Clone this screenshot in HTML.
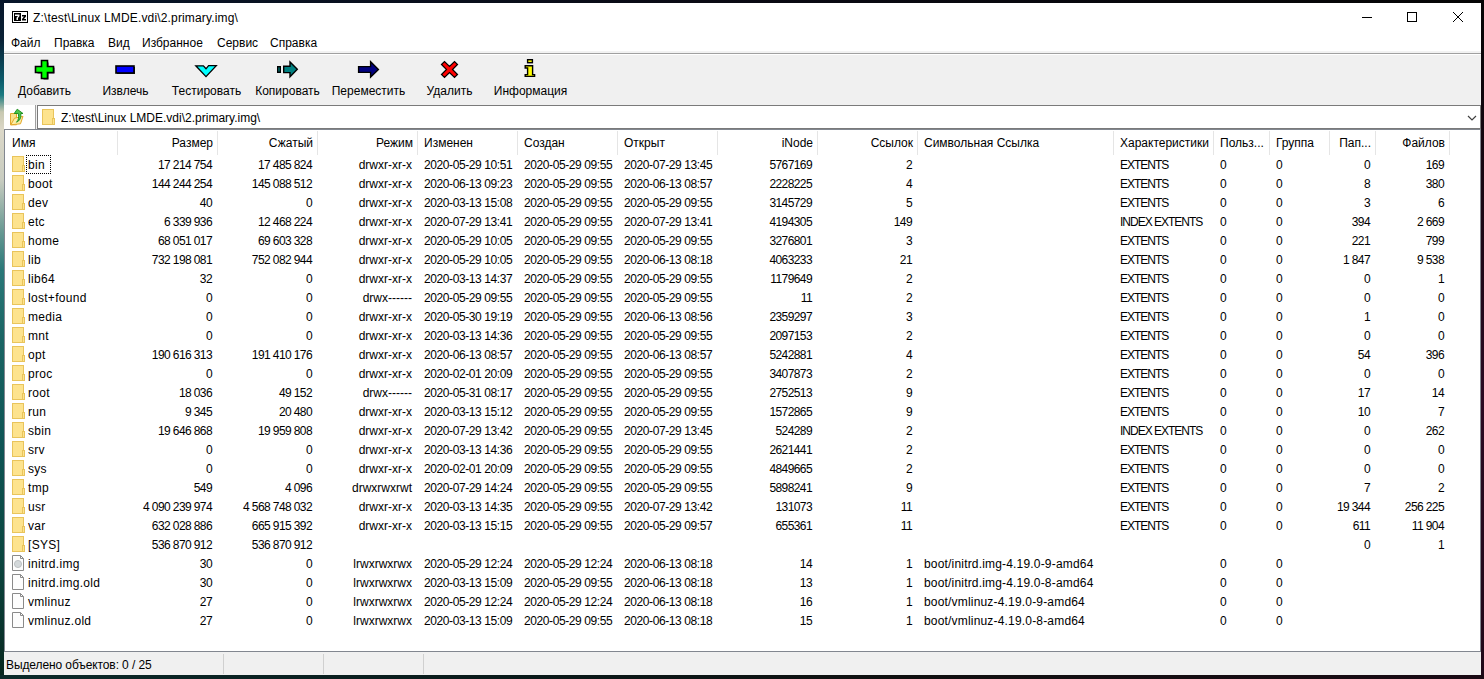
<!DOCTYPE html>
<html><head><meta charset="utf-8">
<style>
*{margin:0;padding:0;box-sizing:border-box}
html,body{width:1484px;height:679px;overflow:hidden}
body{position:relative;font-family:"Liberation Sans",sans-serif;font-size:12px;color:#000;
 background:linear-gradient(90deg,#0b2a3a 0,#0b2a3a 4px,#1a0c16 1480px,#1a0c16 100%);}
.a{position:absolute}
#bgl{position:absolute;left:0;top:0;width:4px;height:679px;background:linear-gradient(180deg,#07162a 0,#0a2236 40px,#0c5a6a 80px,#1a7a80 95px,#c8c8b0 112px,#dcd8c8 130px,#c8ccc0 180px,#6a9a94 230px,#2a7878 270px,#1a6464 340px,#0e5454 450px,#0c4640 560px,#07261e 679px)}
#bgr{position:absolute;left:1481px;top:0;width:3px;height:679px;background:linear-gradient(180deg,#050505 0,#1a0714 200px,#2a0a22 400px,#200818 679px)}
#bgb{position:absolute;left:0;top:675px;width:1484px;height:4px;background:linear-gradient(90deg,#0a2a2a 0,#0a1a1a 500px,#101010 900px,#1a0a14 1484px)}
#bgt{position:absolute;left:0;top:0;width:1484px;height:3px;background:linear-gradient(90deg,#07162a 0,#0a0a14 700px,#050505 1484px)}
#win{position:absolute;left:4px;top:3px;width:1477px;height:672px;background:#f0f0f0;overflow:hidden}
.t{position:absolute;white-space:pre;line-height:15px;margin-top:1px}
.c,.hd{position:absolute;white-space:pre;line-height:19px;height:19px;margin-top:1px}
.hd{line-height:22px;height:22px}
.r{text-align:right}
.n{letter-spacing:-0.6px}
.d{letter-spacing:-0.4px}
.nm{letter-spacing:0.3px}
.sl{letter-spacing:0.18px}
.ch{letter-spacing:-1px}
.hsep{position:absolute;top:131px;width:1px;height:24px;background:#e5e5e5}
.ic{position:absolute}
</style></head><body>
<div id="bgt"></div><div id="bgl"></div><div id="bgr"></div><div id="bgb"></div>
<div id="win">
 <!-- title bar -->
 <div class="a" style="left:0;top:0;width:1477px;height:48px;background:#fff"></div>
 <!-- menu bottom separator -->
 <div class="a" style="left:0;top:48px;width:1477px;height:2px;background:#f2f2f2"></div>
 <div class="a" style="left:0;top:50px;width:1477px;height:1px;background:#a0a0a0"></div>
 <div class="a" style="left:0;top:51px;width:1477px;height:1px;background:#fff"></div>
</div>
<!-- 7z icon -->
<svg class="a" style="left:12px;top:11px" width="16" height="12" viewBox="0 0 16 12">
 <rect x="0.5" y="0.5" width="15" height="11" fill="#fff" stroke="#000"/>
 <rect x="2" y="2" width="7" height="8" fill="#000"/>
 <path d="M3 3.5H7.5V5L6 7V9H4.5V6.8L6 5H3Z" fill="#fff"/>
 <path d="M10 4H14V5.5L12 8H14V9.5H10V8L12 5.5H10Z" fill="#000"/>
</svg>
<div class="t" style="left:33px;top:10px;letter-spacing:0.16px">Z:\test\Linux LMDE.vdi\2.primary.img\</div>
<!-- window buttons -->
<div class="a" style="left:1362px;top:17px;width:10px;height:1px;background:#000"></div>
<div class="a" style="left:1407px;top:12px;width:10px;height:10px;border:1px solid #000"></div>
<svg class="a" style="left:1452px;top:11px" width="12" height="12" viewBox="0 0 12 12"><path d="M1 1L11 11M11 1L1 11" stroke="#000" stroke-width="1"/></svg>
<!-- menu -->
<div class="t" style="left:11px;top:35px">Файл</div>
<div class="t" style="left:54px;top:35px">Правка</div>
<div class="t" style="left:108px;top:35px">Вид</div>
<div class="t" style="left:142px;top:35px">Избранное</div>
<div class="t" style="left:217px;top:35px">Сервис</div>
<div class="t" style="left:270px;top:35px">Справка</div>
<!-- toolbar -->
<div class="t" style="left:4px;width:81px;top:83px;text-align:center">Добавить</div>
<div class="t" style="left:85px;width:81px;top:83px;text-align:center">Извлечь</div>
<div class="t" style="left:166px;width:81px;top:83px;text-align:center">Тестировать</div>
<div class="t" style="left:247px;width:81px;top:83px;text-align:center">Копировать</div>
<div class="t" style="left:328px;width:81px;top:83px;text-align:center">Переместить</div>
<div class="t" style="left:409px;width:81px;top:83px;text-align:center">Удалить</div>
<div class="t" style="left:490px;width:81px;top:83px;text-align:center">Информация</div>
<!-- icons -->
<svg class="a" style="left:34px;top:59px" width="22" height="22" viewBox="0 0 22 22">
 <path d="M8.5 2.5H13.5V7.5H19.5V13.5H13.5V19.5H8.5V13.5H2.5V7.5H8.5Z" fill="#2a1a2a" transform="translate(1,1)"/>
 <path d="M7.5 1.5H13.5V7.5H19.5V13.5H13.5V19.5H7.5V13.5H1.5V7.5H7.5Z" fill="#00ff00" stroke="#000" stroke-width="1.6"/>
</svg>
<svg class="a" style="left:115px;top:65px" width="21" height="10" viewBox="0 0 21 10">
 <rect x="2" y="2" width="18" height="7" fill="#2a2a1a"/>
 <rect x="1" y="1" width="18" height="7" fill="#0000ff" stroke="#000" stroke-width="1.6"/>
</svg>
<svg class="a" style="left:194px;top:64px" width="24" height="14" viewBox="0 0 24 14">
 <path d="M1.8 1.8H9.4L12 4.8L14.6 1.6H22.3L12 12.6Z" fill="#00ffff" stroke="#000" stroke-width="1.3" stroke-linejoin="miter"/>
</svg>
<svg class="a" style="left:276px;top:60px" width="24" height="19" viewBox="0 0 24 19">
 <rect x="1.7" y="6.7" width="2.6" height="5.6" fill="#008080" stroke="#000" stroke-width="1.4"/>
 <path d="M7.7 6.2H14V1.9L21.3 9.3L14 16.7V12.6H7.7Z" fill="#008080" stroke="#000" stroke-width="1.4"/>
</svg>
<svg class="a" style="left:357px;top:60px" width="24" height="19" viewBox="0 0 24 19">
 <path d="M1.6 6.6H13.6V1.7L21.4 9.4L13.6 17.1V12.4H1.6Z" fill="#000080" stroke="#000" stroke-width="1.4"/>
</svg>
<svg class="a" style="left:440px;top:60px" width="19" height="19" viewBox="0 0 19 19">
 <path d="M1.5 4.5L4.5 1.5L9.5 6.5L14.5 1.5L17.5 4.5L12.5 9.5L17.5 14.5L14.5 17.5L9.5 12.5L4.5 17.5L1.5 14.5L6.5 9.5Z" fill="#ff0000" stroke="#000" stroke-width="1.2"/>
</svg>
<svg class="a" style="left:524px;top:58px" width="13" height="20" viewBox="0 0 13 20">
 <rect x="3.6" y="1.7" width="4.8" height="3" fill="#ffff00" stroke="#000" stroke-width="1.4"/>
 <path d="M1.2 7.7H8.6V16.6H10.6V18.4H1.2V16.6H3.6V10H1.2Z" fill="#ffff00" stroke="#000" stroke-width="1.4"/>
</svg>
<!-- address row -->
<div class="a" style="left:4px;top:105px;width:31px;height:24px;background:#fff"></div>
<div class="a" style="left:35px;top:105px;width:1px;height:24px;background:#a0a0a0"></div>
<div class="a" style="left:37px;top:105px;width:1444px;height:24px;background:#fff;border:1px solid #7a7a7a;border-bottom-width:1px"></div>
<svg class="a" style="left:10px;top:108px" width="16" height="18" viewBox="0 0 16 18">
 <path d="M0.5 5.5H6.5V16.8H0.5Z" fill="#fbe08a" stroke="#e3a82a" stroke-width="1"/>
 <path d="M0.8 16.8L4.5 10.2L13 8.3L10.5 15.8Z" fill="#fdeea8" stroke="#e3a82a" stroke-width="1"/>
 <path d="M6.5 14.2C8.5 12.5 9 9.5 8.3 5.5H4.2L7.2 1.2L13 5.5H10.8C11.2 10 10 12.5 6.5 14.2Z" fill="#4cc44c" stroke="#168a16" stroke-width="0.9"/>
</svg>
<svg class="a" style="left:42px;top:109px" width="14" height="16" viewBox="0 0 14 16">
 <rect x="0.5" y="0.5" width="11" height="15" fill="#fde38e" stroke="#e9c45b"/>
 <rect x="10.5" y="9.5" width="2" height="6" fill="#fde38e" stroke="#e9c45b"/>
</svg>
<div class="t" style="left:61px;top:110px">Z:\test\Linux LMDE.vdi\2.primary.img\</div>
<svg class="a" style="left:1467px;top:115px" width="10" height="7" viewBox="0 0 10 7"><path d="M1 1L5 5L9 1" fill="none" stroke="#404040" stroke-width="1.2"/></svg>
<!-- list -->
<div class="a" style="left:4px;top:129px;width:1477px;height:523px;background:#fff;border:1px solid #828790"></div>
<div class="hd" style="left:12px;top:131px">Имя</div>
<div class="hd r" style="left:117px;width:96px;top:131px">Размер</div>
<div class="hsep" style="left:117px"></div>
<div class="hd r" style="left:217px;width:96px;top:131px">Сжатый</div>
<div class="hsep" style="left:217px"></div>
<div class="hd r" style="left:317px;width:96px;top:131px">Режим</div>
<div class="hsep" style="left:317px"></div>
<div class="hd" style="left:424px;top:131px">Изменен</div>
<div class="hsep" style="left:417px"></div>
<div class="hd" style="left:524px;top:131px">Создан</div>
<div class="hsep" style="left:517px"></div>
<div class="hd" style="left:624px;top:131px">Открыт</div>
<div class="hsep" style="left:617px"></div>
<div class="hd r" style="left:717px;width:96px;top:131px">iNode</div>
<div class="hsep" style="left:717px"></div>
<div class="hd r" style="left:817px;width:96px;top:131px">Ссылок</div>
<div class="hsep" style="left:817px"></div>
<div class="hd" style="left:924px;top:131px">Символьная Ссылка</div>
<div class="hsep" style="left:917px"></div>
<div class="hd" style="left:1120px;top:131px">Характеристики</div>
<div class="hsep" style="left:1113px"></div>
<div class="hd" style="left:1220px;top:131px">Польз...</div>
<div class="hsep" style="left:1213px"></div>
<div class="hd" style="left:1276px;top:131px">Группа</div>
<div class="hsep" style="left:1269px"></div>
<div class="hd r" style="left:1329px;width:42px;top:131px">Пап...</div>
<div class="hsep" style="left:1329px"></div>
<div class="hd r" style="left:1375px;width:70px;top:131px">Файлов</div>
<div class="hsep" style="left:1375px"></div>
<div class="hsep" style="left:1449px"></div>
<svg class="ic" style="left:12px;top:156px" width="14" height="16" viewBox="0 0 14 16"><rect x="0.5" y="0.5" width="11" height="15" fill="#fde38e" stroke="#e9c45b"/><rect x="10.5" y="9.5" width="2" height="6" fill="#fde38e" stroke="#e9c45b"/></svg>
<div class="c nm" style="left:28px;top:155px">bin</div>
<div class="c r n" style="left:117px;width:95px;top:155px">17 214 754</div>
<div class="c r n" style="left:217px;width:95px;top:155px">17 485 824</div>
<div class="c r" style="left:317px;width:95px;top:155px">drwxr-xr-x</div>
<div class="c d" style="left:424px;top:155px">2020-05-29 10:51</div>
<div class="c d" style="left:524px;top:155px">2020-05-29 09:55</div>
<div class="c d" style="left:624px;top:155px">2020-07-29 13:45</div>
<div class="c r n" style="left:717px;width:95px;top:155px">5767169</div>
<div class="c r n" style="left:817px;width:95px;top:155px">2</div>
<div class="c ch" style="left:1120px;top:155px">EXTENTS</div>
<div class="c" style="left:1220px;top:155px">0</div>
<div class="c n" style="left:1276px;top:155px">0</div>
<div class="c r n" style="left:1329px;width:41px;top:155px">0</div>
<div class="c r n" style="left:1375px;width:69px;top:155px">169</div>
<svg class="ic" style="left:12px;top:175px" width="14" height="16" viewBox="0 0 14 16"><rect x="0.5" y="0.5" width="11" height="15" fill="#fde38e" stroke="#e9c45b"/><rect x="10.5" y="9.5" width="2" height="6" fill="#fde38e" stroke="#e9c45b"/></svg>
<div class="c nm" style="left:28px;top:174px">boot</div>
<div class="c r n" style="left:117px;width:95px;top:174px">144 244 254</div>
<div class="c r n" style="left:217px;width:95px;top:174px">145 088 512</div>
<div class="c r" style="left:317px;width:95px;top:174px">drwxr-xr-x</div>
<div class="c d" style="left:424px;top:174px">2020-06-13 09:23</div>
<div class="c d" style="left:524px;top:174px">2020-05-29 09:55</div>
<div class="c d" style="left:624px;top:174px">2020-06-13 08:57</div>
<div class="c r n" style="left:717px;width:95px;top:174px">2228225</div>
<div class="c r n" style="left:817px;width:95px;top:174px">4</div>
<div class="c ch" style="left:1120px;top:174px">EXTENTS</div>
<div class="c" style="left:1220px;top:174px">0</div>
<div class="c n" style="left:1276px;top:174px">0</div>
<div class="c r n" style="left:1329px;width:41px;top:174px">8</div>
<div class="c r n" style="left:1375px;width:69px;top:174px">380</div>
<svg class="ic" style="left:12px;top:194px" width="14" height="16" viewBox="0 0 14 16"><rect x="0.5" y="0.5" width="11" height="15" fill="#fde38e" stroke="#e9c45b"/><rect x="10.5" y="9.5" width="2" height="6" fill="#fde38e" stroke="#e9c45b"/></svg>
<div class="c nm" style="left:28px;top:193px">dev</div>
<div class="c r n" style="left:117px;width:95px;top:193px">40</div>
<div class="c r n" style="left:217px;width:95px;top:193px">0</div>
<div class="c r" style="left:317px;width:95px;top:193px">drwxr-xr-x</div>
<div class="c d" style="left:424px;top:193px">2020-03-13 15:08</div>
<div class="c d" style="left:524px;top:193px">2020-05-29 09:55</div>
<div class="c d" style="left:624px;top:193px">2020-05-29 09:55</div>
<div class="c r n" style="left:717px;width:95px;top:193px">3145729</div>
<div class="c r n" style="left:817px;width:95px;top:193px">5</div>
<div class="c ch" style="left:1120px;top:193px">EXTENTS</div>
<div class="c" style="left:1220px;top:193px">0</div>
<div class="c n" style="left:1276px;top:193px">0</div>
<div class="c r n" style="left:1329px;width:41px;top:193px">3</div>
<div class="c r n" style="left:1375px;width:69px;top:193px">6</div>
<svg class="ic" style="left:12px;top:213px" width="14" height="16" viewBox="0 0 14 16"><rect x="0.5" y="0.5" width="11" height="15" fill="#fde38e" stroke="#e9c45b"/><rect x="10.5" y="9.5" width="2" height="6" fill="#fde38e" stroke="#e9c45b"/></svg>
<div class="c nm" style="left:28px;top:212px">etc</div>
<div class="c r n" style="left:117px;width:95px;top:212px">6 339 936</div>
<div class="c r n" style="left:217px;width:95px;top:212px">12 468 224</div>
<div class="c r" style="left:317px;width:95px;top:212px">drwxr-xr-x</div>
<div class="c d" style="left:424px;top:212px">2020-07-29 13:41</div>
<div class="c d" style="left:524px;top:212px">2020-05-29 09:55</div>
<div class="c d" style="left:624px;top:212px">2020-07-29 13:41</div>
<div class="c r n" style="left:717px;width:95px;top:212px">4194305</div>
<div class="c r n" style="left:817px;width:95px;top:212px">149</div>
<div class="c ch" style="left:1120px;top:212px">INDEX EXTENTS</div>
<div class="c" style="left:1220px;top:212px">0</div>
<div class="c n" style="left:1276px;top:212px">0</div>
<div class="c r n" style="left:1329px;width:41px;top:212px">394</div>
<div class="c r n" style="left:1375px;width:69px;top:212px">2 669</div>
<svg class="ic" style="left:12px;top:232px" width="14" height="16" viewBox="0 0 14 16"><rect x="0.5" y="0.5" width="11" height="15" fill="#fde38e" stroke="#e9c45b"/><rect x="10.5" y="9.5" width="2" height="6" fill="#fde38e" stroke="#e9c45b"/></svg>
<div class="c nm" style="left:28px;top:231px">home</div>
<div class="c r n" style="left:117px;width:95px;top:231px">68 051 017</div>
<div class="c r n" style="left:217px;width:95px;top:231px">69 603 328</div>
<div class="c r" style="left:317px;width:95px;top:231px">drwxr-xr-x</div>
<div class="c d" style="left:424px;top:231px">2020-05-29 10:05</div>
<div class="c d" style="left:524px;top:231px">2020-05-29 09:55</div>
<div class="c d" style="left:624px;top:231px">2020-05-29 09:55</div>
<div class="c r n" style="left:717px;width:95px;top:231px">3276801</div>
<div class="c r n" style="left:817px;width:95px;top:231px">3</div>
<div class="c ch" style="left:1120px;top:231px">EXTENTS</div>
<div class="c" style="left:1220px;top:231px">0</div>
<div class="c n" style="left:1276px;top:231px">0</div>
<div class="c r n" style="left:1329px;width:41px;top:231px">221</div>
<div class="c r n" style="left:1375px;width:69px;top:231px">799</div>
<svg class="ic" style="left:12px;top:251px" width="14" height="16" viewBox="0 0 14 16"><rect x="0.5" y="0.5" width="11" height="15" fill="#fde38e" stroke="#e9c45b"/><rect x="10.5" y="9.5" width="2" height="6" fill="#fde38e" stroke="#e9c45b"/></svg>
<div class="c nm" style="left:28px;top:250px">lib</div>
<div class="c r n" style="left:117px;width:95px;top:250px">732 198 081</div>
<div class="c r n" style="left:217px;width:95px;top:250px">752 082 944</div>
<div class="c r" style="left:317px;width:95px;top:250px">drwxr-xr-x</div>
<div class="c d" style="left:424px;top:250px">2020-05-29 10:05</div>
<div class="c d" style="left:524px;top:250px">2020-05-29 09:55</div>
<div class="c d" style="left:624px;top:250px">2020-06-13 08:18</div>
<div class="c r n" style="left:717px;width:95px;top:250px">4063233</div>
<div class="c r n" style="left:817px;width:95px;top:250px">21</div>
<div class="c ch" style="left:1120px;top:250px">EXTENTS</div>
<div class="c" style="left:1220px;top:250px">0</div>
<div class="c n" style="left:1276px;top:250px">0</div>
<div class="c r n" style="left:1329px;width:41px;top:250px">1 847</div>
<div class="c r n" style="left:1375px;width:69px;top:250px">9 538</div>
<svg class="ic" style="left:12px;top:270px" width="14" height="16" viewBox="0 0 14 16"><rect x="0.5" y="0.5" width="11" height="15" fill="#fde38e" stroke="#e9c45b"/><rect x="10.5" y="9.5" width="2" height="6" fill="#fde38e" stroke="#e9c45b"/></svg>
<div class="c nm" style="left:28px;top:269px">lib64</div>
<div class="c r n" style="left:117px;width:95px;top:269px">32</div>
<div class="c r n" style="left:217px;width:95px;top:269px">0</div>
<div class="c r" style="left:317px;width:95px;top:269px">drwxr-xr-x</div>
<div class="c d" style="left:424px;top:269px">2020-03-13 14:37</div>
<div class="c d" style="left:524px;top:269px">2020-05-29 09:55</div>
<div class="c d" style="left:624px;top:269px">2020-05-29 09:55</div>
<div class="c r n" style="left:717px;width:95px;top:269px">1179649</div>
<div class="c r n" style="left:817px;width:95px;top:269px">2</div>
<div class="c ch" style="left:1120px;top:269px">EXTENTS</div>
<div class="c" style="left:1220px;top:269px">0</div>
<div class="c n" style="left:1276px;top:269px">0</div>
<div class="c r n" style="left:1329px;width:41px;top:269px">0</div>
<div class="c r n" style="left:1375px;width:69px;top:269px">1</div>
<svg class="ic" style="left:12px;top:289px" width="14" height="16" viewBox="0 0 14 16"><rect x="0.5" y="0.5" width="11" height="15" fill="#fde38e" stroke="#e9c45b"/><rect x="10.5" y="9.5" width="2" height="6" fill="#fde38e" stroke="#e9c45b"/></svg>
<div class="c nm" style="left:28px;top:288px">lost+found</div>
<div class="c r n" style="left:117px;width:95px;top:288px">0</div>
<div class="c r n" style="left:217px;width:95px;top:288px">0</div>
<div class="c r" style="left:317px;width:95px;top:288px">drwx------</div>
<div class="c d" style="left:424px;top:288px">2020-05-29 09:55</div>
<div class="c d" style="left:524px;top:288px">2020-05-29 09:55</div>
<div class="c d" style="left:624px;top:288px">2020-05-29 09:55</div>
<div class="c r n" style="left:717px;width:95px;top:288px">11</div>
<div class="c r n" style="left:817px;width:95px;top:288px">2</div>
<div class="c ch" style="left:1120px;top:288px">EXTENTS</div>
<div class="c" style="left:1220px;top:288px">0</div>
<div class="c n" style="left:1276px;top:288px">0</div>
<div class="c r n" style="left:1329px;width:41px;top:288px">0</div>
<div class="c r n" style="left:1375px;width:69px;top:288px">0</div>
<svg class="ic" style="left:12px;top:308px" width="14" height="16" viewBox="0 0 14 16"><rect x="0.5" y="0.5" width="11" height="15" fill="#fde38e" stroke="#e9c45b"/><rect x="10.5" y="9.5" width="2" height="6" fill="#fde38e" stroke="#e9c45b"/></svg>
<div class="c nm" style="left:28px;top:307px">media</div>
<div class="c r n" style="left:117px;width:95px;top:307px">0</div>
<div class="c r n" style="left:217px;width:95px;top:307px">0</div>
<div class="c r" style="left:317px;width:95px;top:307px">drwxr-xr-x</div>
<div class="c d" style="left:424px;top:307px">2020-05-30 19:19</div>
<div class="c d" style="left:524px;top:307px">2020-05-29 09:55</div>
<div class="c d" style="left:624px;top:307px">2020-06-13 08:56</div>
<div class="c r n" style="left:717px;width:95px;top:307px">2359297</div>
<div class="c r n" style="left:817px;width:95px;top:307px">3</div>
<div class="c ch" style="left:1120px;top:307px">EXTENTS</div>
<div class="c" style="left:1220px;top:307px">0</div>
<div class="c n" style="left:1276px;top:307px">0</div>
<div class="c r n" style="left:1329px;width:41px;top:307px">1</div>
<div class="c r n" style="left:1375px;width:69px;top:307px">0</div>
<svg class="ic" style="left:12px;top:327px" width="14" height="16" viewBox="0 0 14 16"><rect x="0.5" y="0.5" width="11" height="15" fill="#fde38e" stroke="#e9c45b"/><rect x="10.5" y="9.5" width="2" height="6" fill="#fde38e" stroke="#e9c45b"/></svg>
<div class="c nm" style="left:28px;top:326px">mnt</div>
<div class="c r n" style="left:117px;width:95px;top:326px">0</div>
<div class="c r n" style="left:217px;width:95px;top:326px">0</div>
<div class="c r" style="left:317px;width:95px;top:326px">drwxr-xr-x</div>
<div class="c d" style="left:424px;top:326px">2020-03-13 14:36</div>
<div class="c d" style="left:524px;top:326px">2020-05-29 09:55</div>
<div class="c d" style="left:624px;top:326px">2020-05-29 09:55</div>
<div class="c r n" style="left:717px;width:95px;top:326px">2097153</div>
<div class="c r n" style="left:817px;width:95px;top:326px">2</div>
<div class="c ch" style="left:1120px;top:326px">EXTENTS</div>
<div class="c" style="left:1220px;top:326px">0</div>
<div class="c n" style="left:1276px;top:326px">0</div>
<div class="c r n" style="left:1329px;width:41px;top:326px">0</div>
<div class="c r n" style="left:1375px;width:69px;top:326px">0</div>
<svg class="ic" style="left:12px;top:346px" width="14" height="16" viewBox="0 0 14 16"><rect x="0.5" y="0.5" width="11" height="15" fill="#fde38e" stroke="#e9c45b"/><rect x="10.5" y="9.5" width="2" height="6" fill="#fde38e" stroke="#e9c45b"/></svg>
<div class="c nm" style="left:28px;top:345px">opt</div>
<div class="c r n" style="left:117px;width:95px;top:345px">190 616 313</div>
<div class="c r n" style="left:217px;width:95px;top:345px">191 410 176</div>
<div class="c r" style="left:317px;width:95px;top:345px">drwxr-xr-x</div>
<div class="c d" style="left:424px;top:345px">2020-06-13 08:57</div>
<div class="c d" style="left:524px;top:345px">2020-05-29 09:55</div>
<div class="c d" style="left:624px;top:345px">2020-06-13 08:57</div>
<div class="c r n" style="left:717px;width:95px;top:345px">5242881</div>
<div class="c r n" style="left:817px;width:95px;top:345px">4</div>
<div class="c ch" style="left:1120px;top:345px">EXTENTS</div>
<div class="c" style="left:1220px;top:345px">0</div>
<div class="c n" style="left:1276px;top:345px">0</div>
<div class="c r n" style="left:1329px;width:41px;top:345px">54</div>
<div class="c r n" style="left:1375px;width:69px;top:345px">396</div>
<svg class="ic" style="left:12px;top:365px" width="14" height="16" viewBox="0 0 14 16"><rect x="0.5" y="0.5" width="11" height="15" fill="#fde38e" stroke="#e9c45b"/><rect x="10.5" y="9.5" width="2" height="6" fill="#fde38e" stroke="#e9c45b"/></svg>
<div class="c nm" style="left:28px;top:364px">proc</div>
<div class="c r n" style="left:117px;width:95px;top:364px">0</div>
<div class="c r n" style="left:217px;width:95px;top:364px">0</div>
<div class="c r" style="left:317px;width:95px;top:364px">drwxr-xr-x</div>
<div class="c d" style="left:424px;top:364px">2020-02-01 20:09</div>
<div class="c d" style="left:524px;top:364px">2020-05-29 09:55</div>
<div class="c d" style="left:624px;top:364px">2020-05-29 09:55</div>
<div class="c r n" style="left:717px;width:95px;top:364px">3407873</div>
<div class="c r n" style="left:817px;width:95px;top:364px">2</div>
<div class="c ch" style="left:1120px;top:364px">EXTENTS</div>
<div class="c" style="left:1220px;top:364px">0</div>
<div class="c n" style="left:1276px;top:364px">0</div>
<div class="c r n" style="left:1329px;width:41px;top:364px">0</div>
<div class="c r n" style="left:1375px;width:69px;top:364px">0</div>
<svg class="ic" style="left:12px;top:384px" width="14" height="16" viewBox="0 0 14 16"><rect x="0.5" y="0.5" width="11" height="15" fill="#fde38e" stroke="#e9c45b"/><rect x="10.5" y="9.5" width="2" height="6" fill="#fde38e" stroke="#e9c45b"/></svg>
<div class="c nm" style="left:28px;top:383px">root</div>
<div class="c r n" style="left:117px;width:95px;top:383px">18 036</div>
<div class="c r n" style="left:217px;width:95px;top:383px">49 152</div>
<div class="c r" style="left:317px;width:95px;top:383px">drwx------</div>
<div class="c d" style="left:424px;top:383px">2020-05-31 08:17</div>
<div class="c d" style="left:524px;top:383px">2020-05-29 09:55</div>
<div class="c d" style="left:624px;top:383px">2020-05-29 09:55</div>
<div class="c r n" style="left:717px;width:95px;top:383px">2752513</div>
<div class="c r n" style="left:817px;width:95px;top:383px">9</div>
<div class="c ch" style="left:1120px;top:383px">EXTENTS</div>
<div class="c" style="left:1220px;top:383px">0</div>
<div class="c n" style="left:1276px;top:383px">0</div>
<div class="c r n" style="left:1329px;width:41px;top:383px">17</div>
<div class="c r n" style="left:1375px;width:69px;top:383px">14</div>
<svg class="ic" style="left:12px;top:403px" width="14" height="16" viewBox="0 0 14 16"><rect x="0.5" y="0.5" width="11" height="15" fill="#fde38e" stroke="#e9c45b"/><rect x="10.5" y="9.5" width="2" height="6" fill="#fde38e" stroke="#e9c45b"/></svg>
<div class="c nm" style="left:28px;top:402px">run</div>
<div class="c r n" style="left:117px;width:95px;top:402px">9 345</div>
<div class="c r n" style="left:217px;width:95px;top:402px">20 480</div>
<div class="c r" style="left:317px;width:95px;top:402px">drwxr-xr-x</div>
<div class="c d" style="left:424px;top:402px">2020-03-13 15:12</div>
<div class="c d" style="left:524px;top:402px">2020-05-29 09:55</div>
<div class="c d" style="left:624px;top:402px">2020-05-29 09:55</div>
<div class="c r n" style="left:717px;width:95px;top:402px">1572865</div>
<div class="c r n" style="left:817px;width:95px;top:402px">9</div>
<div class="c ch" style="left:1120px;top:402px">EXTENTS</div>
<div class="c" style="left:1220px;top:402px">0</div>
<div class="c n" style="left:1276px;top:402px">0</div>
<div class="c r n" style="left:1329px;width:41px;top:402px">10</div>
<div class="c r n" style="left:1375px;width:69px;top:402px">7</div>
<svg class="ic" style="left:12px;top:422px" width="14" height="16" viewBox="0 0 14 16"><rect x="0.5" y="0.5" width="11" height="15" fill="#fde38e" stroke="#e9c45b"/><rect x="10.5" y="9.5" width="2" height="6" fill="#fde38e" stroke="#e9c45b"/></svg>
<div class="c nm" style="left:28px;top:421px">sbin</div>
<div class="c r n" style="left:117px;width:95px;top:421px">19 646 868</div>
<div class="c r n" style="left:217px;width:95px;top:421px">19 959 808</div>
<div class="c r" style="left:317px;width:95px;top:421px">drwxr-xr-x</div>
<div class="c d" style="left:424px;top:421px">2020-07-29 13:42</div>
<div class="c d" style="left:524px;top:421px">2020-05-29 09:55</div>
<div class="c d" style="left:624px;top:421px">2020-07-29 13:45</div>
<div class="c r n" style="left:717px;width:95px;top:421px">524289</div>
<div class="c r n" style="left:817px;width:95px;top:421px">2</div>
<div class="c ch" style="left:1120px;top:421px">INDEX EXTENTS</div>
<div class="c" style="left:1220px;top:421px">0</div>
<div class="c n" style="left:1276px;top:421px">0</div>
<div class="c r n" style="left:1329px;width:41px;top:421px">0</div>
<div class="c r n" style="left:1375px;width:69px;top:421px">262</div>
<svg class="ic" style="left:12px;top:441px" width="14" height="16" viewBox="0 0 14 16"><rect x="0.5" y="0.5" width="11" height="15" fill="#fde38e" stroke="#e9c45b"/><rect x="10.5" y="9.5" width="2" height="6" fill="#fde38e" stroke="#e9c45b"/></svg>
<div class="c nm" style="left:28px;top:440px">srv</div>
<div class="c r n" style="left:117px;width:95px;top:440px">0</div>
<div class="c r n" style="left:217px;width:95px;top:440px">0</div>
<div class="c r" style="left:317px;width:95px;top:440px">drwxr-xr-x</div>
<div class="c d" style="left:424px;top:440px">2020-03-13 14:36</div>
<div class="c d" style="left:524px;top:440px">2020-05-29 09:55</div>
<div class="c d" style="left:624px;top:440px">2020-05-29 09:55</div>
<div class="c r n" style="left:717px;width:95px;top:440px">2621441</div>
<div class="c r n" style="left:817px;width:95px;top:440px">2</div>
<div class="c ch" style="left:1120px;top:440px">EXTENTS</div>
<div class="c" style="left:1220px;top:440px">0</div>
<div class="c n" style="left:1276px;top:440px">0</div>
<div class="c r n" style="left:1329px;width:41px;top:440px">0</div>
<div class="c r n" style="left:1375px;width:69px;top:440px">0</div>
<svg class="ic" style="left:12px;top:460px" width="14" height="16" viewBox="0 0 14 16"><rect x="0.5" y="0.5" width="11" height="15" fill="#fde38e" stroke="#e9c45b"/><rect x="10.5" y="9.5" width="2" height="6" fill="#fde38e" stroke="#e9c45b"/></svg>
<div class="c nm" style="left:28px;top:459px">sys</div>
<div class="c r n" style="left:117px;width:95px;top:459px">0</div>
<div class="c r n" style="left:217px;width:95px;top:459px">0</div>
<div class="c r" style="left:317px;width:95px;top:459px">drwxr-xr-x</div>
<div class="c d" style="left:424px;top:459px">2020-02-01 20:09</div>
<div class="c d" style="left:524px;top:459px">2020-05-29 09:55</div>
<div class="c d" style="left:624px;top:459px">2020-05-29 09:55</div>
<div class="c r n" style="left:717px;width:95px;top:459px">4849665</div>
<div class="c r n" style="left:817px;width:95px;top:459px">2</div>
<div class="c ch" style="left:1120px;top:459px">EXTENTS</div>
<div class="c" style="left:1220px;top:459px">0</div>
<div class="c n" style="left:1276px;top:459px">0</div>
<div class="c r n" style="left:1329px;width:41px;top:459px">0</div>
<div class="c r n" style="left:1375px;width:69px;top:459px">0</div>
<svg class="ic" style="left:12px;top:479px" width="14" height="16" viewBox="0 0 14 16"><rect x="0.5" y="0.5" width="11" height="15" fill="#fde38e" stroke="#e9c45b"/><rect x="10.5" y="9.5" width="2" height="6" fill="#fde38e" stroke="#e9c45b"/></svg>
<div class="c nm" style="left:28px;top:478px">tmp</div>
<div class="c r n" style="left:117px;width:95px;top:478px">549</div>
<div class="c r n" style="left:217px;width:95px;top:478px">4 096</div>
<div class="c r" style="left:317px;width:95px;top:478px">drwxrwxrwt</div>
<div class="c d" style="left:424px;top:478px">2020-07-29 14:24</div>
<div class="c d" style="left:524px;top:478px">2020-05-29 09:55</div>
<div class="c d" style="left:624px;top:478px">2020-05-29 09:55</div>
<div class="c r n" style="left:717px;width:95px;top:478px">5898241</div>
<div class="c r n" style="left:817px;width:95px;top:478px">9</div>
<div class="c ch" style="left:1120px;top:478px">EXTENTS</div>
<div class="c" style="left:1220px;top:478px">0</div>
<div class="c n" style="left:1276px;top:478px">0</div>
<div class="c r n" style="left:1329px;width:41px;top:478px">7</div>
<div class="c r n" style="left:1375px;width:69px;top:478px">2</div>
<svg class="ic" style="left:12px;top:498px" width="14" height="16" viewBox="0 0 14 16"><rect x="0.5" y="0.5" width="11" height="15" fill="#fde38e" stroke="#e9c45b"/><rect x="10.5" y="9.5" width="2" height="6" fill="#fde38e" stroke="#e9c45b"/></svg>
<div class="c nm" style="left:28px;top:497px">usr</div>
<div class="c r n" style="left:117px;width:95px;top:497px">4 090 239 974</div>
<div class="c r n" style="left:217px;width:95px;top:497px">4 568 748 032</div>
<div class="c r" style="left:317px;width:95px;top:497px">drwxr-xr-x</div>
<div class="c d" style="left:424px;top:497px">2020-03-13 14:35</div>
<div class="c d" style="left:524px;top:497px">2020-05-29 09:55</div>
<div class="c d" style="left:624px;top:497px">2020-07-29 13:42</div>
<div class="c r n" style="left:717px;width:95px;top:497px">131073</div>
<div class="c r n" style="left:817px;width:95px;top:497px">11</div>
<div class="c ch" style="left:1120px;top:497px">EXTENTS</div>
<div class="c" style="left:1220px;top:497px">0</div>
<div class="c n" style="left:1276px;top:497px">0</div>
<div class="c r n" style="left:1329px;width:41px;top:497px">19 344</div>
<div class="c r n" style="left:1375px;width:69px;top:497px">256 225</div>
<svg class="ic" style="left:12px;top:517px" width="14" height="16" viewBox="0 0 14 16"><rect x="0.5" y="0.5" width="11" height="15" fill="#fde38e" stroke="#e9c45b"/><rect x="10.5" y="9.5" width="2" height="6" fill="#fde38e" stroke="#e9c45b"/></svg>
<div class="c nm" style="left:28px;top:516px">var</div>
<div class="c r n" style="left:117px;width:95px;top:516px">632 028 886</div>
<div class="c r n" style="left:217px;width:95px;top:516px">665 915 392</div>
<div class="c r" style="left:317px;width:95px;top:516px">drwxr-xr-x</div>
<div class="c d" style="left:424px;top:516px">2020-03-13 15:15</div>
<div class="c d" style="left:524px;top:516px">2020-05-29 09:55</div>
<div class="c d" style="left:624px;top:516px">2020-05-29 09:57</div>
<div class="c r n" style="left:717px;width:95px;top:516px">655361</div>
<div class="c r n" style="left:817px;width:95px;top:516px">11</div>
<div class="c ch" style="left:1120px;top:516px">EXTENTS</div>
<div class="c" style="left:1220px;top:516px">0</div>
<div class="c n" style="left:1276px;top:516px">0</div>
<div class="c r n" style="left:1329px;width:41px;top:516px">611</div>
<div class="c r n" style="left:1375px;width:69px;top:516px">11 904</div>
<svg class="ic" style="left:12px;top:536px" width="14" height="16" viewBox="0 0 14 16"><rect x="0.5" y="0.5" width="11" height="15" fill="#fde38e" stroke="#e9c45b"/><rect x="10.5" y="9.5" width="2" height="6" fill="#fde38e" stroke="#e9c45b"/></svg>
<div class="c nm" style="left:28px;top:535px">[SYS]</div>
<div class="c r n" style="left:117px;width:95px;top:535px">536 870 912</div>
<div class="c r n" style="left:217px;width:95px;top:535px">536 870 912</div>
<div class="c r n" style="left:1329px;width:41px;top:535px">0</div>
<div class="c r n" style="left:1375px;width:69px;top:535px">1</div>
<svg class="ic" style="left:12px;top:555px" width="12" height="16" viewBox="0 0 12 16"><path d="M0.5 0.5H8.5L11.5 3.5V15.5H0.5Z" fill="#fdfdfd" stroke="#8a8a8a"/><path d="M8.5 0.5V3.5H11.5" fill="none" stroke="#8a8a8a"/><circle cx="6" cy="9" r="3.6" fill="#d3d8da" stroke="#b5b9bb" stroke-width="0.8"/></svg>
<div class="c nm" style="left:28px;top:554px">initrd.img</div>
<div class="c r n" style="left:117px;width:95px;top:554px">30</div>
<div class="c r n" style="left:217px;width:95px;top:554px">0</div>
<div class="c r" style="left:317px;width:95px;top:554px">lrwxrwxrwx</div>
<div class="c d" style="left:424px;top:554px">2020-05-29 12:24</div>
<div class="c d" style="left:524px;top:554px">2020-05-29 12:24</div>
<div class="c d" style="left:624px;top:554px">2020-06-13 08:18</div>
<div class="c r n" style="left:717px;width:95px;top:554px">14</div>
<div class="c r n" style="left:817px;width:95px;top:554px">1</div>
<div class="c sl" style="left:924px;top:554px">boot/initrd.img-4.19.0-9-amd64</div>
<div class="c" style="left:1220px;top:554px">0</div>
<div class="c n" style="left:1276px;top:554px">0</div>
<svg class="ic" style="left:12px;top:574px" width="12" height="16" viewBox="0 0 12 16"><path d="M0.5 0.5H8.5L11.5 3.5V15.5H0.5Z" fill="#fdfdfd" stroke="#8a8a8a"/><path d="M8.5 0.5V3.5H11.5" fill="none" stroke="#8a8a8a"/></svg>
<div class="c nm" style="left:28px;top:573px">initrd.img.old</div>
<div class="c r n" style="left:117px;width:95px;top:573px">30</div>
<div class="c r n" style="left:217px;width:95px;top:573px">0</div>
<div class="c r" style="left:317px;width:95px;top:573px">lrwxrwxrwx</div>
<div class="c d" style="left:424px;top:573px">2020-03-13 15:09</div>
<div class="c d" style="left:524px;top:573px">2020-05-29 09:55</div>
<div class="c d" style="left:624px;top:573px">2020-06-13 08:18</div>
<div class="c r n" style="left:717px;width:95px;top:573px">13</div>
<div class="c r n" style="left:817px;width:95px;top:573px">1</div>
<div class="c sl" style="left:924px;top:573px">boot/initrd.img-4.19.0-8-amd64</div>
<div class="c" style="left:1220px;top:573px">0</div>
<div class="c n" style="left:1276px;top:573px">0</div>
<svg class="ic" style="left:12px;top:593px" width="12" height="16" viewBox="0 0 12 16"><path d="M0.5 0.5H8.5L11.5 3.5V15.5H0.5Z" fill="#fdfdfd" stroke="#8a8a8a"/><path d="M8.5 0.5V3.5H11.5" fill="none" stroke="#8a8a8a"/></svg>
<div class="c nm" style="left:28px;top:592px">vmlinuz</div>
<div class="c r n" style="left:117px;width:95px;top:592px">27</div>
<div class="c r n" style="left:217px;width:95px;top:592px">0</div>
<div class="c r" style="left:317px;width:95px;top:592px">lrwxrwxrwx</div>
<div class="c d" style="left:424px;top:592px">2020-05-29 12:24</div>
<div class="c d" style="left:524px;top:592px">2020-05-29 12:24</div>
<div class="c d" style="left:624px;top:592px">2020-06-13 08:18</div>
<div class="c r n" style="left:717px;width:95px;top:592px">16</div>
<div class="c r n" style="left:817px;width:95px;top:592px">1</div>
<div class="c sl" style="left:924px;top:592px">boot/vmlinuz-4.19.0-9-amd64</div>
<div class="c" style="left:1220px;top:592px">0</div>
<div class="c n" style="left:1276px;top:592px">0</div>
<svg class="ic" style="left:12px;top:612px" width="12" height="16" viewBox="0 0 12 16"><path d="M0.5 0.5H8.5L11.5 3.5V15.5H0.5Z" fill="#fdfdfd" stroke="#8a8a8a"/><path d="M8.5 0.5V3.5H11.5" fill="none" stroke="#8a8a8a"/></svg>
<div class="c nm" style="left:28px;top:611px">vmlinuz.old</div>
<div class="c r n" style="left:117px;width:95px;top:611px">27</div>
<div class="c r n" style="left:217px;width:95px;top:611px">0</div>
<div class="c r" style="left:317px;width:95px;top:611px">lrwxrwxrwx</div>
<div class="c d" style="left:424px;top:611px">2020-03-13 15:09</div>
<div class="c d" style="left:524px;top:611px">2020-05-29 09:55</div>
<div class="c d" style="left:624px;top:611px">2020-06-13 08:18</div>
<div class="c r n" style="left:717px;width:95px;top:611px">15</div>
<div class="c r n" style="left:817px;width:95px;top:611px">1</div>
<div class="c sl" style="left:924px;top:611px">boot/vmlinuz-4.19.0-8-amd64</div>
<div class="c" style="left:1220px;top:611px">0</div>
<div class="c n" style="left:1276px;top:611px">0</div>
<!-- focus rect -->
<div class="a" style="left:26px;top:155px;width:25px;height:19px;border:1px dotted #000"></div>
<!-- status bar -->
<div class="a" style="left:4px;top:652px;width:1477px;height:23px;background:#f0f0f0"></div>
<div class="a" style="left:223px;top:654px;width:1px;height:20px;background:#d0d0d0"></div>
<div class="a" style="left:323px;top:654px;width:1px;height:20px;background:#d0d0d0"></div>
<div class="a" style="left:423px;top:654px;width:1px;height:20px;background:#d0d0d0"></div>
<div class="t" style="left:6px;top:657px;letter-spacing:-0.1px">Выделено объектов: 0 / 25</div>
</body></html>
